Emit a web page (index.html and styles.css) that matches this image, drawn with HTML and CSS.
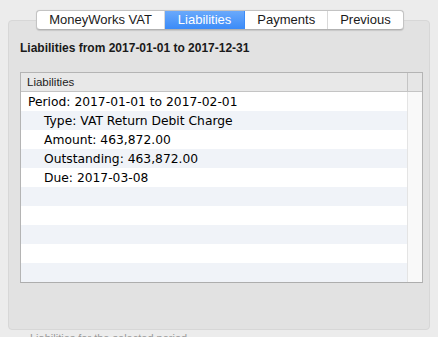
FILE: index.html
```html
<!DOCTYPE html>
<html>
<head>
<meta charset="utf-8">
<link rel="stylesheet" href="styles.css">
</head>
<body>
<div class="window">
  <div class="tabs">
    <div class="tab">MoneyWorks VAT</div>
    <div class="tab selected">Liabilities</div>
    <div class="tab">Payments</div>
    <div class="tab last">Previous</div>
  </div>
  <div class="panel">
    <div class="title">Liabilities from 2017-01-01 to 2017-12-31</div>
    <div class="table">
      <div class="head">
        <div class="head-cell">Liabilities</div>
        <div class="head-corner"></div>
      </div>
      <div class="body">
        <div class="rows">
          <div class="row">Period: 2017-01-01 to 2017-02-01</div>
          <div class="row alt indent">Type: VAT Return Debit Charge</div>
          <div class="row indent">Amount: 463,872.00</div>
          <div class="row alt indent">Outstanding: 463,872.00</div>
          <div class="row indent">Due: 2017-03-08</div>
          <div class="row alt"></div>
          <div class="row"></div>
          <div class="row alt"></div>
          <div class="row"></div>
          <div class="row alt"></div>
        </div>
        <div class="scroll"></div>
      </div>
    </div>
  </div>
  <div class="footnote">Liabilities for the selected period</div>
</div>
</body>
</html>
```

FILE: styles.css
```css
html, body {
  margin: 0;
  padding: 0;
}
body {
  background: #ececec;
  width: 438px;
  height: 337px;
  overflow: hidden;
}
.window {
  padding-top: 10px;
  display: flex;
  flex-direction: column;
}
.tabs {
  position: relative;
  z-index: 2;
  align-self: center;
  margin-left: 2px;
  display: flex;
  height: 18px;
  margin-bottom: -10px;
  border: 1px solid #c3c3c3;
  border-bottom-color: #b2b2b2;
  border-radius: 4px;
  background: #ffffff;
  box-shadow: 0 0.5px 1px rgba(0,0,0,0.12);
  overflow: hidden;
  font-family: "Liberation Sans", Arial, sans-serif;
  font-size: 13px;
  color: #1a1a1a;
}
.tab {
  padding: 0 12px;
  line-height: 18px;
  border-right: 1px solid #d9d9d9;
}
.tab.last {
  border-right: none;
}
.tab.selected {
  background: linear-gradient(#6aa9fb, #3b8bf8);
  color: #ffffff;
  border-right-color: #3b8bf8;
  padding: 0 13px 0 13px;
}
.panel {
  margin: 0 8px;
  background: #e2e2e2;
  border: 1px solid #d7d7d7;
  border-radius: 4px;
  padding: 19px 6px 0 11px;
  box-sizing: border-box;
  height: 310px;
}
.title {
  font-family: "Liberation Sans", Arial, sans-serif;
  font-weight: bold;
  font-size: 12px;
  line-height: 15px;
  color: #1a1a1a;
  margin-top: 1px;
}
.table {
  margin-top: 16px;
  height: 211px;
  box-sizing: border-box;
  border: 1px solid #b4b4b4;
  border-bottom-color: #adadad;
  background: #ffffff;
  display: flex;
  flex-direction: column;
  overflow: hidden;
}
.head {
  display: flex;
  height: 19px;
  box-sizing: border-box;
  border-bottom: 1px solid #c4c4c4;
  background: #e8e8e8;
  font-family: "Liberation Sans", Arial, sans-serif;
  font-size: 11.5px;
  color: #222;
}
.head-cell {
  flex: 1;
  padding-left: 6px;
  line-height: 18px;
}
.head-corner {
  width: 14px;
  border-left: 1px solid #c4c4c4;
  background: #e6e6e6;
}
.body {
  flex: 1;
  display: flex;
  overflow: hidden;
}
.rows {
  flex: 1;
}
.row {
  height: 19px;
  line-height: 20px;
  padding-left: 7px;
  font-family: "DejaVu Sans", Verdana, sans-serif;
  font-size: 12.3px;
  color: #000;
  white-space: nowrap;
}
.row.alt {
  background: #f0f3f8;
}
.row.indent {
  padding-left: 23px;
}
.scroll {
  width: 14px;
  border-left: 1px solid #e4e4e4;
  background: #f9f9f9;
}
.footnote {
  margin-top: 2px;
  padding-left: 30px;
  font-family: "Liberation Sans", Arial, sans-serif;
  font-size: 11px;
  color: #9a9a9a;
}
```
